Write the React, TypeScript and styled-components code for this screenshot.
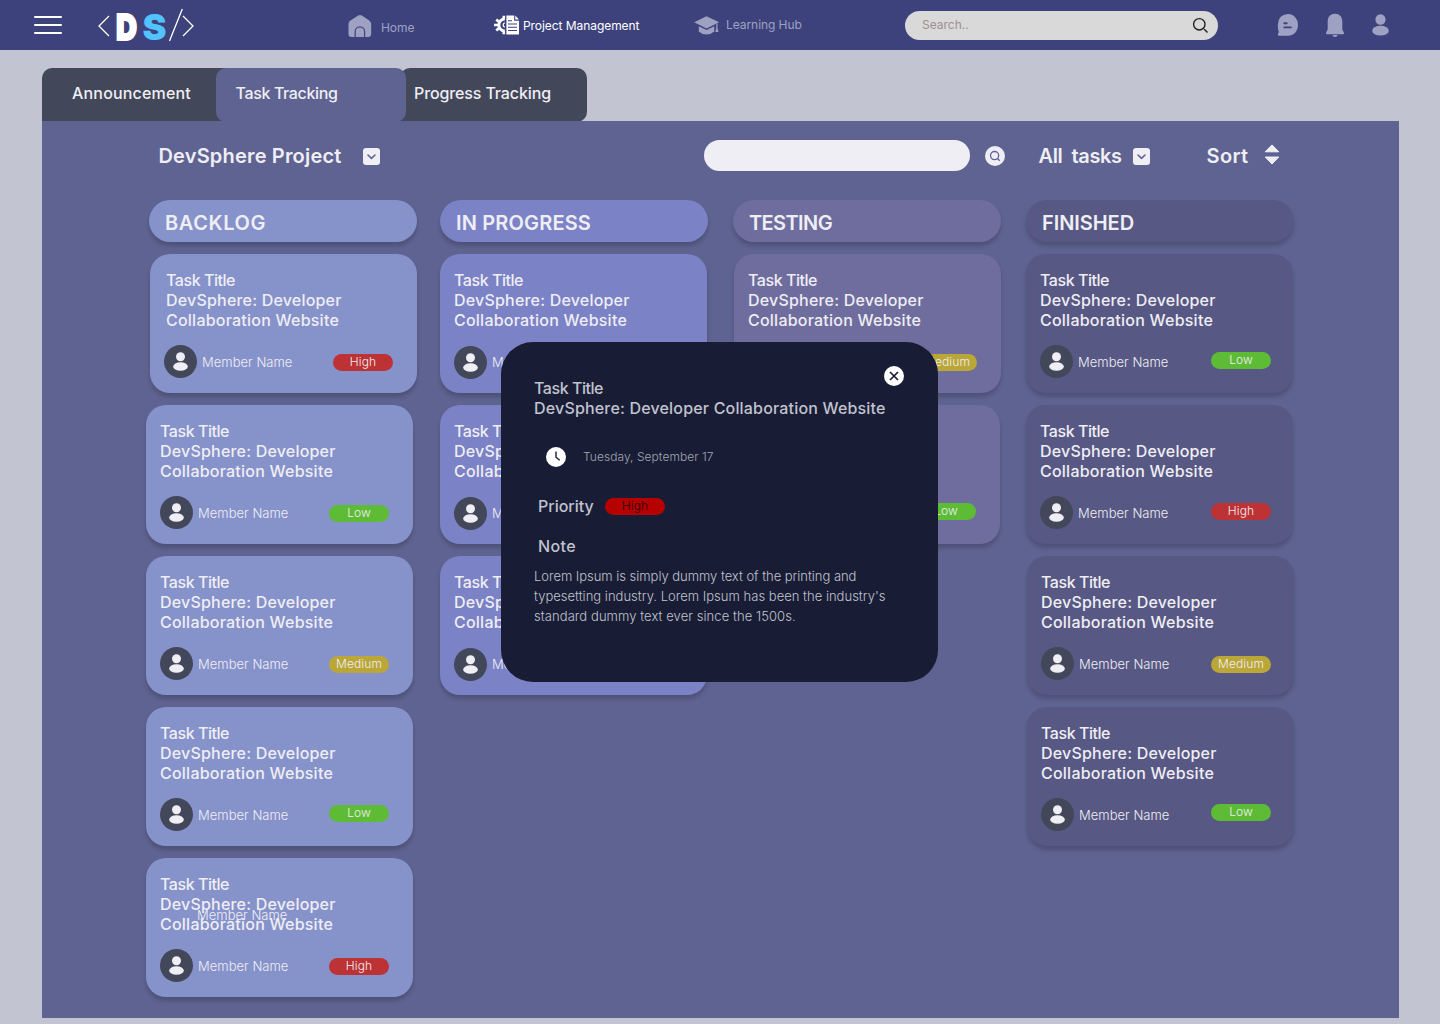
import React from 'react';
import styled, { createGlobalStyle } from 'styled-components';

const GlobalStyle = createGlobalStyle`
  * { box-sizing: border-box; }
  body { margin: 0; background: #c2c5d1; font-family: Inter, "Open Sans", sans-serif; color: #efeef4; }
  svg { display: block; flex: none; overflow: visible; }
`;

const Page = styled.div`
  width: 1440px;
  height: 1024px;
  overflow: hidden;
`;

const TopBar = styled.header`
  display: flex;
  align-items: flex-start;
  height: 50px;
  padding-left: 34px;
  background: #3d427c;
`;

const Menu = styled.div`
  display: flex;
  flex-direction: column;
  gap: 5.6px;
  width: 28px;
  margin-top: 16px;
`;
const MenuBar = styled.span`
  height: 2.4px;
  border-radius: 2px;
  background: #fff;
`;
const LogoBox = styled.div`
  margin: 5px 0 0 36px;
`;

const NavItem = styled.a<{ $top: number; $gap: number; $w: number; $left?: number; $active?: boolean }>`
  display: flex;
  align-items: flex-start;
  gap: ${(p) => p.$gap}px;
  width: ${(p) => p.$w}px;
  margin: ${(p) => p.$top}px 0 0 ${(p) => p.$left ?? 0}px;
  color: ${(p) => (p.$active ? '#fff' : '#9fa1c3')};
`;
const NavLabel = styled.span<{ $top: number }>`
  margin-top: ${(p) => p.$top}px;
  font-size: 12px;
  line-height: 16px;
  letter-spacing: -0.06px;
  white-space: nowrap;
`;

const TopSearch = styled.div`
  display: flex;
  justify-content: space-between;
  width: 313px;
  height: 29px;
  margin: 11px 0 0 85px;
  padding: 6px 9px 0 17px;
  border-radius: 15px;
  background: #d9d9d9;
  color: #a18e92;
  font-size: 12px;
  line-height: 16px;
`;
const TopIcons = styled.div`
  display: flex;
  align-items: flex-start;
  gap: 23px;
  margin: 13px 0 0 59px;
  color: #9fa1c3;
`;

const Tabs = styled.nav`
  display: flex;
  height: 53px;
  margin: 18px 0 0 42px;
`;
const Tab = styled.div<{ $w: number; $pad: number; $overlap?: number; $radius: string; $active?: boolean; $ls: number }>`
  position: relative;
  z-index: ${(p) => (p.$active ? 1 : 0)};
  width: ${(p) => p.$w}px;
  height: 54px;
  margin-left: ${(p) => -(p.$overlap ?? 0)}px;
  padding: 15px 0 0 ${(p) => p.$pad}px;
  border-radius: ${(p) => p.$radius};
  background: ${(p) => (p.$active ? '#5f6391' : '#43475a')};
  font-size: 16px;
  font-weight: 500;
  line-height: 20px;
  letter-spacing: ${(p) => p.$ls}px;
  white-space: nowrap;
`;

const Panel = styled.main`
  position: relative;
  width: 1357px;
  height: 897px;
  margin-left: 42px;
  padding: 19px 0 0 104px;
  background: #5f6391;
`;
const Toolbar = styled.div`
  display: flex;
  align-items: center;
  height: 31px;
  padding-left: 12.5px;
`;
const ToolLabel = styled.div<{ $w: number; $ls: number }>`
  width: ${(p) => p.$w}px;
  font-size: 20px;
  font-weight: 600;
  line-height: 26px;
  letter-spacing: ${(p) => p.$ls}px;
  white-space: pre;
`;
const Drop = styled.div`
  display: flex;
  align-items: center;
  justify-content: center;
  width: 17px;
  height: 17px;
  margin-top: 2px;
  border-radius: 3px;
  background: #efeef4;
`;
const TaskSearch = styled.div`
  width: 266px;
  height: 31px;
  margin-left: 324.5px;
  border-radius: 16px;
  background: #efeef4;
`;
const Round = styled.div`
  display: flex;
  align-items: center;
  justify-content: center;
  width: 20px;
  height: 20px;
  margin: 0 33.5px 0 15px;
  border-radius: 50%;
  background: #efeef4;
`;
const SortWrap = styled.div`
  display: flex;
  align-items: center;
  margin-left: 57px;
`;
const SortArrows = styled.div`
  margin-bottom: 3px;
`;

const Board = styled.div`
  display: grid;
  grid-template-columns: 294px 293px 293px 268px;
  margin-top: 29px;
`;
const Column = styled.section`
  display: flex;
  flex-direction: column;
  gap: 12px;
`;
const ColumnHead = styled.h2<{ $bg: string; $shift: number; $ls: number }>`
  width: 268px;
  height: 42px;
  margin: 0 0 0 ${(p) => p.$shift}px;
  padding: 10px 0 0 16px;
  border-radius: 21px;
  background: ${(p) => p.$bg};
  box-shadow: 0 4px 4px rgba(0, 0, 0, 0.18);
  font-size: 20px;
  font-weight: 600;
  line-height: 26px;
  letter-spacing: ${(p) => p.$ls}px;
`;
const Card = styled.article<{ $bg: string; $shift: number }>`
  position: relative;
  width: 267px;
  height: 139px;
  margin-left: ${(p) => p.$shift}px;
  padding: 16px 0 0 14px;
  border-radius: 20px;
  background: ${(p) => p.$bg};
  box-shadow: 0 4px 4px rgba(0, 0, 0, 0.18);
`;
const Title = styled.div<{ $indent?: number }>`
  padding-left: ${(p) => p.$indent ?? 0}px;
`;
const Line = styled.div<{ $ls: number; $size?: number; $weight?: number }>`
  height: 20px;
  font-size: ${(p) => p.$size ?? 16}px;
  font-weight: ${(p) => p.$weight ?? 500};
  line-height: 20px;
  letter-spacing: ${(p) => p.$ls}px;
  white-space: nowrap;
`;
const CardFoot = styled.div`
  display: flex;
  align-items: flex-start;
  padding-top: 15px;
`;
const Avatar = styled.div<{ $drop: number }>`
  display: flex;
  align-items: center;
  justify-content: center;
  width: 33px;
  height: 33px;
  margin-top: ${(p) => p.$drop}px;
  border-radius: 50%;
  background: #43475a;
`;
const Member = styled.div`
  width: 131px;
  margin: 7px 0 0 5px;
  font-size: 13px;
  font-weight: 300;
  line-height: 20px;
  letter-spacing: 0.02px;
  white-space: nowrap;
`;
const StrayMember = styled(Member)`
  position: absolute;
  left: 51px;
  top: 47px;
  margin: 0;
`;
const levelColor = { High: '#bc3235', Medium: '#bba638', Low: '#5dbb35' };
type Level = keyof typeof levelColor;
const Badge = styled.div<{ $level: Level; $top: number; $left: number; $strong?: boolean }>`
  width: 60px;
  height: 17px;
  margin: ${(p) => p.$top}px 0 0 ${(p) => p.$left}px;
  border-radius: 9px;
  background: ${(p) => (p.$strong ? '#b70000' : levelColor[p.$level])};
  color: ${(p) => (p.$strong ? '#240508' : '#efeef4')};
  font-size: 12px;
  font-weight: 300;
  line-height: 16px;
  letter-spacing: 0.1px;
  text-align: center;
`;

const Modal = styled.div`
  position: absolute;
  left: 459px;
  top: 221px;
  width: 437px;
  height: 340px;
  padding: 36px 33px 0;
  border-radius: 32px;
  background: #181d35;
  color: #c1c3cf;
`;
const Close = styled.button`
  position: absolute;
  left: 383px;
  top: 24px;
  width: 20px;
  height: 20px;
  padding: 0;
  border: 0;
  background: none;
`;
const DateRow = styled.div`
  display: flex;
  align-items: center;
  gap: 17px;
  height: 20px;
  margin: 29px 0 0 12px;
  color: #a3a5b3;
`;
const PriorityRow = styled.div`
  display: flex;
  margin: 29px 0 0 4px;
`;
const PriorityName = styled(Line)`
  width: 67px;
`;
const NoteHead = styled.div`
  margin: 20px 0 10px 4px;
`;

const PersonIcon = ({ w = 15, h = 19 }: { w?: number; h?: number }) => (
  <svg width={w} height={h} viewBox="0 0 17 21" fill="currentColor" preserveAspectRatio="none">
    <ellipse cx="8.5" cy="5.2" rx="5.1" ry="5" />
    <ellipse cx="8.5" cy="15.9" rx="8.3" ry="4.700" />
  </svg>
);

const Logo = () => (
  <svg width="96" height="40" viewBox="0 0 96 40" fill="none" stroke="#fff" strokeWidth="1.3">
    <path d="M11 11 1 21l10 10" />
    <text x="18" y="35" fontFamily="Inter" fontWeight="900" fontSize="36" textLength="21" lengthAdjust="spacingAndGlyphs" fill="#fff" strokeWidth="1.800">D</text>
    <text x="44.500" y="35" fontFamily="Inter" fontWeight="900" fontSize="36" textLength="24" lengthAdjust="spacingAndGlyphs" fill="#53c3ff" stroke="none">S</text>
    <path d="M84.300 4 71.500 36M85 11l10 10-10 10" />
  </svg>
);

const HomeIcon = () => (
  <svg width="24" height="23" viewBox="0 0 24 23">
    <path d="M9.800.8Q12-.6 14.200.8l7 4.700Q23.200 6.900 23.200 9v9.800Q23.200 22 20 22H3.700Q.5 22 .5 18.800V9Q.5 6.900 2.500 5.500z" fill="currentColor" />
    <path d="M7.200 22v-5.400a4.700 4.700 0 0 1 9.400 0V22" fill="none" stroke="#3d427c" strokeWidth="1.200" />
  </svg>
);

const ProjectIcon = () => (
  <svg width="25" height="20" viewBox="0 0 25 20">
    <g fill="none" stroke="currentColor">
      <path d="M10.800 4A6 6 0 0 0 10.800 16" strokeWidth="3" />
      <path d="M9.800.8v3M9.800 16.200v3M0 10h4M2.200 4.600l2.700 2M2.200 15.400l2.700-2" strokeWidth="2.600" />
      <path d="M10.800 7.800a2.300 2.300 0 0 0 0 4.400" strokeWidth="1.300" />
    </g>
    <path d="M12.400.5h7.800v5.200H25V19.500H12.400z" fill="currentColor" />
    <path d="M21.300.6 24.900 4.500H21.300z" fill="currentColor" />
    <path d="M14 5.700h4M14 9h9M14 12.200h9M14 15.500h9" stroke="#3d427c" strokeWidth="1.100" />
  </svg>
);

const CapIcon = () => (
  <svg width="26" height="19" viewBox="0 0 26 19" fill="currentColor">
    <path d="M12.500.2 25.200 6.300 12.500 12.400.2 6.300z" />
    <path d="M4.800 10.200v5.200Q8 18.400 12.500 18.400t7.800-3v-5.200l-7.800 3.800z" />
    <path d="M22.300 8v4l-1 4h3.200l-1-4V7.500z" />
  </svg>
);

const ChatIcon = () => (
  <svg width="22" height="23" viewBox="0 0 22 23">
    <path d="M11 1a10 10.600 0 0 1 10 11c0 6-4.200 10.800-10 10.800H1.600Q.3 22.600 1 21l.9-2.200Q.8 17 .8 12 .8 1.800 11 1z" fill="currentColor" />
    <path d="M7.300 10.200h2.400M7.300 14.400h6.600" stroke="#3d427c" strokeWidth="1.900" strokeLinecap="round" />
  </svg>
);

const BellIcon = () => (
  <svg width="26" height="25" viewBox="0 0 26 25" fill="currentColor">
    <path d="M13 .8c4.600 0 7.300 3.300 7.300 7.600v8l1.600 3q.7 1.800-1 1.800H5.100q-1.700 0-1-1.800l1.600-3v-8C5.700 4.100 8.400.8 13 .8zM10.200 22h5.600q-1 2-2.800 2t-2.800-2z" />
  </svg>
);

const Chevron = () => (
  <svg width="9" height="6" viewBox="0 0 9 6" fill="none" stroke="#5f6391" strokeWidth="1.600" strokeLinecap="round" strokeLinejoin="round">
    <path d="m1 1 3.500 3.300L8 1" />
  </svg>
);

const SortIcon = () => (
  <svg width="16" height="21" viewBox="0 0 16 21" fill="#efeef4" stroke="#efeef4" strokeLinejoin="round">
    <path d="M8 .9 14.800 7.800H1.200zM8 20 1.200 13h13.600z" />
  </svg>
);

const ClockIcon = () => (
  <svg width="20" height="20" viewBox="0 0 20 20">
    <circle cx="10" cy="10" r="10" fill="#fff" />
    <path d="M10 4.500v5.700l3.700 3" fill="none" stroke="#181d35" strokeWidth="1.400" />
  </svg>
);

interface Task {
  shift?: number;
  indent?: number;
  avatar?: number;
  badge: Level;
  top?: number;
  left?: number;
  stray?: boolean;
}
interface ColumnData {
  name: string;
  bg: string;
  shift: number;
  ls: number;
  tasks: Task[];
}

const columns: ColumnData[] = [
  {
    name: 'BACKLOG', bg: '#8692ca', shift: 3, ls: 0.6,
    tasks: [
      { shift: 4, indent: 2, badge: 'High' },
      { badge: 'Low' },
      { badge: 'Medium' },
      { badge: 'Low', top: 7 },
      { badge: 'High', stray: true },
    ],
  },
  {
    name: 'IN PROGRESS', bg: '#7b82c6', shift: 0, ls: 0.16,
    tasks: [{ avatar: 1, badge: 'High' }, { avatar: 1, badge: 'High' }, { avatar: 1, badge: 'High' }],
  },
  {
    name: 'TESTING', bg: '#6e6d9e', shift: 0, ls: -0.6,
    tasks: [{ shift: 1, badge: 'Medium' }, { badge: 'Low', top: 7 }],
  },
  {
    name: 'FINISHED', bg: '#575883', shift: 0, ls: -0.06,
    tasks: [
      { badge: 'Low', top: 7, left: 2 },
      { badge: 'High', top: 7, left: 2 },
      { shift: 1, badge: 'Medium', left: 1 },
      { shift: 1, badge: 'Low', top: 6, left: 1 },
    ],
  },
];

const TaskCard = ({ bg, task }: { bg: string; task: Task }) => (
  <Card $bg={bg} $shift={task.shift ?? 0}>
    <Title $indent={task.indent}>
      <Line $ls={-0.45}>Task Title</Line>
      <Line $ls={0.2}>DevSphere: Developer</Line>
      <Line $ls={0.23}>Collaboration Website</Line>
    </Title>
    {task.stray && <StrayMember>Member Name</StrayMember>}
    <CardFoot>
      <Avatar $drop={task.avatar ?? 0}><PersonIcon /></Avatar>
      <Member>Member Name</Member>
      <Badge $level={task.badge} $top={task.top ?? 9} $left={task.left ?? 0}>{task.badge}</Badge>
    </CardFoot>
  </Card>
);

export default function App() {
  return (
    <Page>
      <GlobalStyle />
      <TopBar>
        <Menu><MenuBar /><MenuBar /><MenuBar /></Menu>
        <LogoBox><Logo /></LogoBox>
        <NavItem $left={154} $top={15} $gap={9} $w={146}>
          <HomeIcon /><NavLabel $top={5}>Home</NavLabel>
        </NavItem>
        <NavItem $top={15} $gap={4} $w={200} $active>
          <ProjectIcon /><NavLabel $top={3}>Project Management</NavLabel>
        </NavItem>
        <NavItem $top={16} $gap={6} $w={126}>
          <CapIcon /><NavLabel $top={1}>Learning Hub</NavLabel>
        </NavItem>
        <TopSearch>
          <span>Search..</span>
          <svg width="17" height="17" viewBox="0 0 17 17" fill="none" stroke="#222" strokeWidth="1.400">
            <circle cx="7.300" cy="7.300" r="5.700" /><path d="m12 12 3.500 3.500" />
          </svg>
        </TopSearch>
        <TopIcons>
          <ChatIcon />
          <BellIcon />
          <UserSlot><PersonIcon w={17} h={22} /></UserSlot>
        </TopIcons>
      </TopBar>
      <Tabs>
        <Tab $w={190} $pad={30} $radius="10px 0 0 0" $ls={0.18}>Announcement</Tab>
        <Tab $w={190} $pad={19.5} $overlap={16} $radius="10px" $ls={-0.36} $active>Task Tracking</Tab>
        <Tab $w={187} $pad={14} $overlap={6} $radius="10px 10px 10px 0" $ls={-0.12}>Progress Tracking</Tab>
      </Tabs>
      <Panel>
        <Toolbar>
          <ToolLabel $w={204} $ls={0.18}>DevSphere Project</ToolLabel>
          <Drop><Chevron /></Drop>
          <TaskSearch />
          <Round>
            <svg width="12" height="12" viewBox="0 0 12 12" fill="none" stroke="#5f6391" strokeWidth="1.300">
              <circle cx="5.600" cy="5.600" r="4.100" /><path d="m8.700 8.700 2 2" />
            </svg>
          </Round>
          <ToolLabel $w={94} $ls={-0.4}>{'All  tasks'}</ToolLabel>
          <Drop><Chevron /></Drop>
          <SortWrap>
            <ToolLabel $w={57.5} $ls={0.37}>Sort</ToolLabel>
            <SortArrows><SortIcon /></SortArrows>
          </SortWrap>
        </Toolbar>
        <Board>
          {columns.map((c) => (
            <Column key={c.name}>
              <ColumnHead $bg={c.bg} $shift={c.shift} $ls={c.ls}>{c.name}</ColumnHead>
              {c.tasks.map((t, i) => <TaskCard key={i} bg={c.bg} task={t} />)}
            </Column>
          ))}
        </Board>
        <Modal>
          <Close aria-label="Close">
            <svg width="20" height="20" viewBox="0 0 20 20">
              <circle cx="10" cy="10" r="10" fill="#fff" />
              <path d="m6 6 8 8M14 6l-8 8" stroke="#181d35" strokeWidth="1.700" />
            </svg>
          </Close>
          <Line $ls={-0.45}>Task Title</Line>
          <Line $ls={0.18}>DevSphere: Developer Collaboration Website</Line>
          <DateRow>
            <ClockIcon />
            <Line $ls={0.05} $size={12} $weight={300}>Tuesday, September 17</Line>
          </DateRow>
          <PriorityRow>
            <PriorityName $ls={0}>Priority</PriorityName>
            <Badge $level="High" $top={2} $left={0} $strong>High</Badge>
          </PriorityRow>
          <NoteHead><Line $ls={0.37}>Note</Line></NoteHead>
          <Line $ls={-0.03} $size={13} $weight={300}>Lorem Ipsum is simply dummy text of the printing and</Line>
          <Line $ls={0.02} $size={13} $weight={300}>typesetting industry. Lorem Ipsum has been the industry's</Line>
          <Line $ls={0.07} $size={13} $weight={300}>standard dummy text ever since the 1500s.</Line>
        </Modal>
      </Panel>
    </Page>
  );
}

const UserSlot = styled.div`
  margin: 1px 0 0 1px;
`;
